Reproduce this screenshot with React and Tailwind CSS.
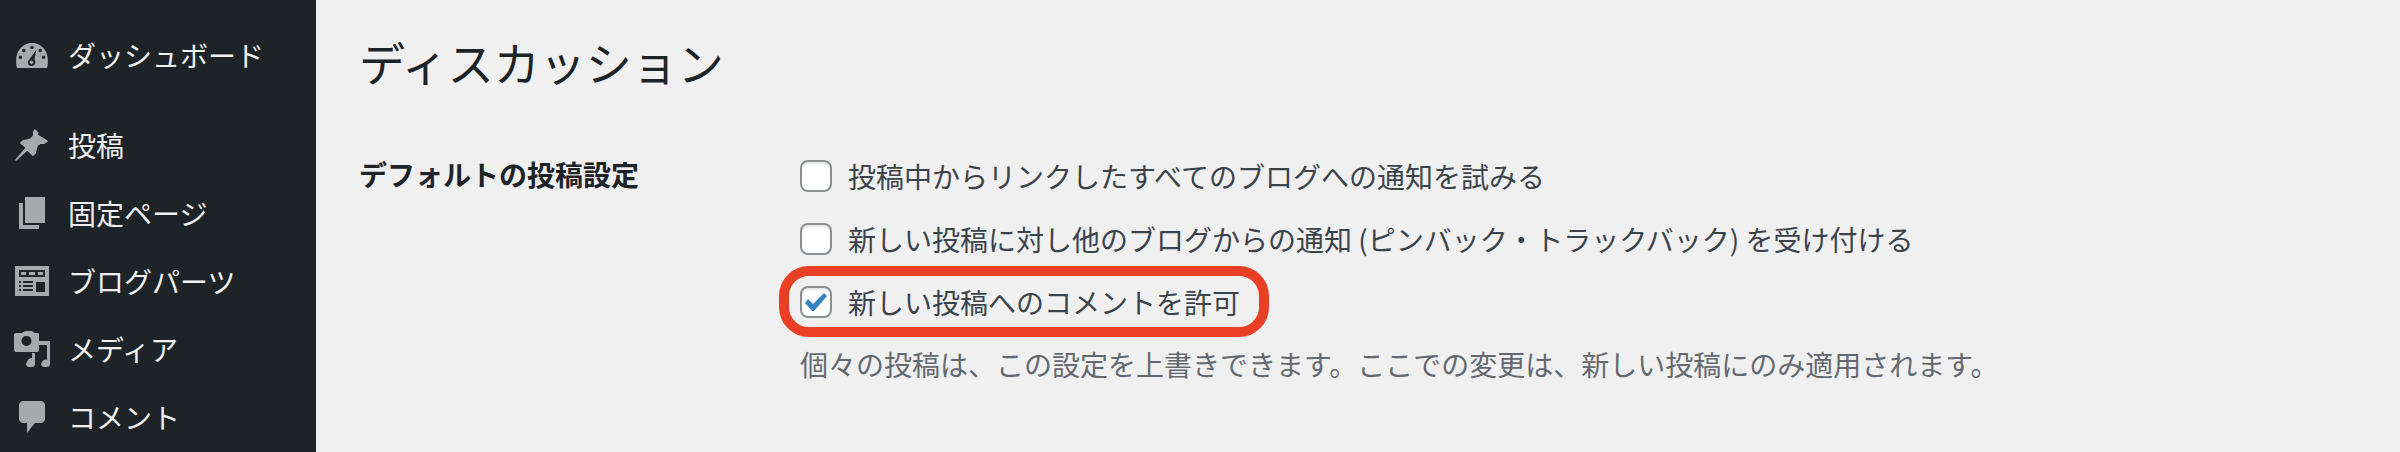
const font = "font-['Noto_Sans_CJK_JP','Noto_Sans',sans-serif]";

function GaugeIcon() {
  return (
    <svg width="32" height="26" viewBox="0 0 33 27">
      <path fillRule="evenodd" fill="#a7aaad" d="M1 27C0 24 0 22 0 19C0 9 7 1 16.500 1C26 1 33 9 33 19C33 22 33 24 32 27ZM16.500 4a1.800 1.800 0 1 0 0 3.600a1.800 1.800 0 1 0 0-3.600ZM8 7a1.800 1.800 0 1 0 0 3.600a1.800 1.800 0 1 0 0-3.600ZM25 7a1.800 1.800 0 1 0 0 3.600a1.800 1.800 0 1 0 0-3.600ZM4.500 14a1.800 1.800 0 1 0 0 3.600a1.800 1.800 0 1 0 0-3.600ZM28.500 14a1.800 1.800 0 1 0 0 3.600a1.800 1.800 0 1 0 0-3.600ZM21 8L14 18C11 20 12 25 16 25C20 25 21 21 19 18Z" />
      <circle cx="16" cy="21" r="1.800" fill="#a7aaad" />
    </svg>
  );
}

function PinIcon() {
  return (
    <svg width="34" height="34" viewBox="0 0 36 36">
      <path fill="#a7aaad" d="M21 1L25 5L24 7L34 13L35 14L31 17L27 17L24 19L22 27L19 30L13 24L1 35L0 34L11 21L5 16L8 13L16 11L19 8L19 4Z" />
    </svg>
  );
}

function PagesIcon() {
  return (
    <svg width="26" height="32" viewBox="0 0 26 32">
      <path fill="#a7aaad" d="M6 0H26V26H6Z M0 6H4V28H20V32H0Z" />
    </svg>
  );
}

function BlocksIcon() {
  return (
    <svg width="34" height="30" viewBox="0 0 34 30">
      <path fill="#a7aaad" d="M0 0H34V30H0Z" />
      <path fill="#1d2327" d="M4 4H30V11H4ZM21 16H30V26H21ZM4 15H6V17H4ZM8 15H18V17H8ZM4 19H6V21H4ZM8 19H18V21H8ZM4 23H6V25H4ZM8 23H18V25H8Z" />
      <path fill="#a7aaad" d="M6 6H11V9H6ZM14 6H20V9H14ZM23 6H28V9H23Z" />
    </svg>
  );
}

function MediaIcon() {
  return (
    <svg width="36" height="36" viewBox="0 0 36 36">
      <path fillRule="evenodd" fill="#a7aaad" d="M8 2L11 0H18L21 2H24C25 2 25 3 25 4V19C25 20 24 21 23 21H2C1 21 0 20 0 19V4C0 3 1 2 2 2ZM12 5a5 5 0 1 0 1 0Z" />
      <path fill="#a7aaad" d="M25 10H36V33C36 36 33 36 31 36C28 36 26 34 28 31C29 29 31 28 33 29V14H25Z" />
      <path fill="#a7aaad" d="M21 22V33C21 36 18 36 16 36C13 36 11 34 13 31C14 28 16 27 18 27V22Z" />
    </svg>
  );
}

function CommentIcon() {
  return (
    <svg width="26" height="32" viewBox="0 0 26 32">
      <path fill="#a7aaad" d="M4 0H22C24 0 26 2 26 4V18C26 20 24 22 22 22H16L8 32V22H4C2 22 0 20 0 18V4C0 2 2 0 4 0Z" />
    </svg>
  );
}

const menu = [
  { label: "ダッシュボード", icon: <GaugeIcon /> },
  { label: "投稿", icon: <PinIcon /> },
  { label: "固定ページ", icon: <PagesIcon /> },
  { label: "ブログパーツ", icon: <BlocksIcon /> },
  { label: "メディア", icon: <MediaIcon /> },
  { label: "コメント", icon: <CommentIcon /> },
];

function Option({ label, checked }) {
  return (
    <div className="flex items-center gap-4 h-8">
      <span className="w-8 h-8 shrink-0 rounded-lg border-2 border-[#8c8f94] bg-white flex items-center justify-center shadow-[inset_0_2px_2px_rgba(0,0,0,0.1)]">
        {checked && (
          <svg width="24" height="20" viewBox="0 0 24 20">
            <path fill="#3582c4" d="M1 11L4 7L9 12L20 1L23 4L10 19H8Z" />
          </svg>
        )}
      </span>
      <span className="text-[28px] leading-8 text-[#3c434a]">{label}</span>
    </div>
  );
}

export default function App() {
  return (
    <div className={`${font} w-[2400px] h-[452px] flex overflow-hidden bg-[#f0f0f1]`}>
      <aside className="w-[316px] shrink-0 bg-[#1d2327] pt-[35px] flex flex-col">
        {menu.map((item, i) => (
          <div key={item.label} className={`flex items-center h-[40px] ${i === 0 ? "mb-[50px]" : "mb-[28px]"}`}>
            <span className="w-[68px] pr-[4px] flex items-center justify-center shrink-0">{item.icon}</span>
            <span className="text-[28px] leading-10 text-[#f0f0f1]">{item.label}</span>
          </div>
        ))}
      </aside>

      <main className="flex-1 pl-[43px] pt-[31px]">
        <h1 className="text-[46px] leading-[60px] font-normal text-[#1d2327]">ディスカッション</h1>
        <div className="flex mt-[69px]">
          <h2 className="w-[441px] shrink-0 text-[28px] leading-[28px] font-bold text-[#1d2327]">デフォルトの投稿設定</h2>
          <div className="flex flex-col">
            <div className="flex flex-col gap-[31px]">
              <Option label="投稿中からリンクしたすべてのブログへの通知を試みる" />
              <Option label="新しい投稿に対し他のブログからの通知 (ピンバック・トラックバック) を受け付ける" />
              <div className="relative">
                <Option label="新しい投稿へのコメントを許可" checked />
                <div className="absolute left-[-21px] top-[-20px] w-[490px] h-[71px] rounded-[30px] border-[10px] border-[#e94025]" />
              </div>
            </div>
            <p className="mt-[30px] text-[28px] leading-8 text-[#646970]">個々の投稿は、この設定を上書きできます。ここでの変更は、新しい投稿にのみ適用されます。</p>
          </div>
        </div>
      </main>
    </div>
  );
}
